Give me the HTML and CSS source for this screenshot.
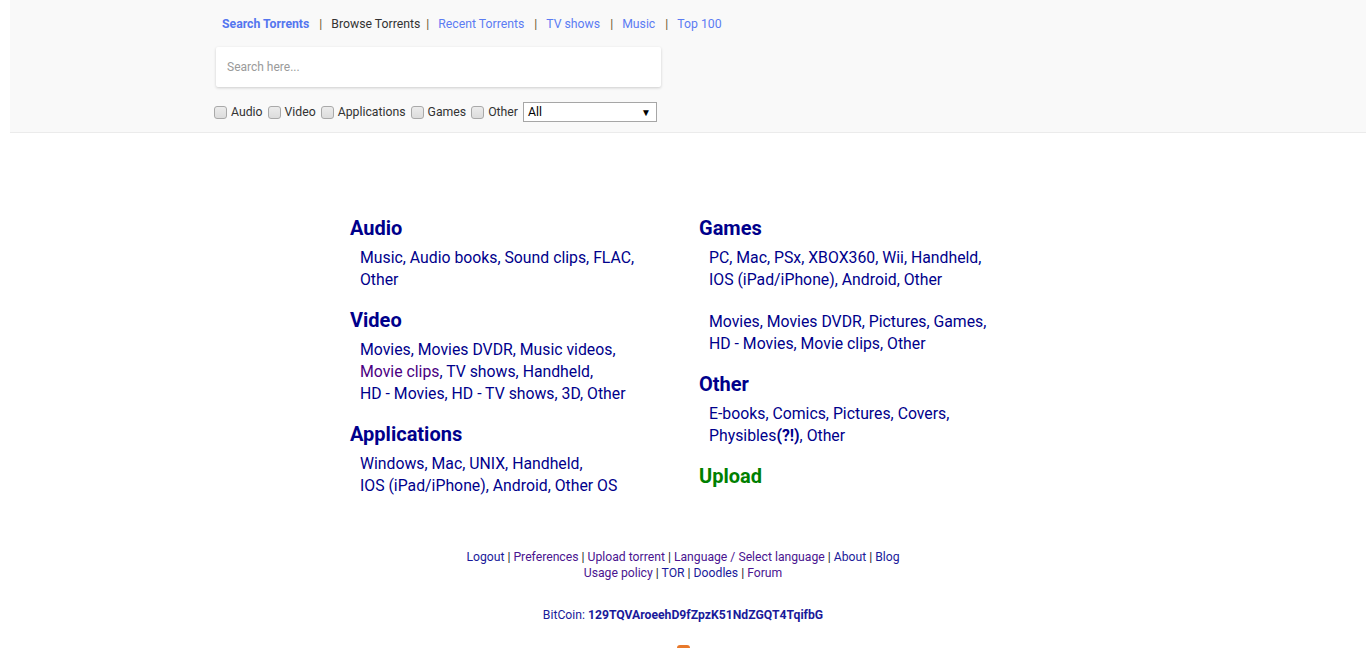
FILE: index.html
```html
<!DOCTYPE html>
<html>
<head>
<meta charset="utf-8">
<link rel="stylesheet" href="styles.css">
</head>
<body>
<div class="header">
  <div class="header-inner">
    <div class="nav">
      <a class="nav-link active" href="#">Search Torrents</a><span class="sep">|</span><span class="nav-plain">Browse Torrents</span><span class="sep sep-b">|</span><a class="nav-link" href="#">Recent Torrents</a><span class="sep">|</span><a class="nav-link" href="#">TV shows</a><span class="sep">|</span><a class="nav-link" href="#">Music</a><span class="sep">|</span><a class="nav-link" href="#">Top 100</a>
    </div>
    <div class="search">
      <input class="search-input" type="text" placeholder="Search here...">
    </div>
    <div class="filters">
      <label class="chk"><input type="checkbox">Audio</label>
      <label class="chk"><input type="checkbox">Video</label>
      <label class="chk"><input type="checkbox">Applications</label>
      <label class="chk"><input type="checkbox">Games</label>
      <label class="chk"><input type="checkbox">Other</label>
      <div class="select"><span>All</span><span class="arrow">▼</span></div>
    </div>
  </div>
</div>

<div class="main">
  <div class="col">
    <div class="cat">
      <h2 class="cat-title">Audio</h2>
      <div class="cat-links"><a href="#">Music</a>, <a href="#">Audio books</a>, <a href="#">Sound clips</a>, <a href="#">FLAC</a>,<br><a href="#">Other</a></div>
    </div>
    <div class="cat">
      <h2 class="cat-title">Video</h2>
      <div class="cat-links"><a href="#">Movies</a>, <a href="#">Movies DVDR</a>, <a href="#">Music videos</a>,<br><a href="#" class="visited">Movie clips</a>, <a href="#">TV shows</a>, <a href="#">Handheld</a>,<br><a href="#">HD - Movies</a>, <a href="#">HD - TV shows</a>, <a href="#">3D</a>, <a href="#">Other</a></div>
    </div>
    <div class="cat">
      <h2 class="cat-title">Applications</h2>
      <div class="cat-links"><a href="#">Windows</a>, <a href="#">Mac</a>, <a href="#">UNIX</a>, <a href="#">Handheld</a>,<br><a href="#">IOS (iPad/iPhone)</a>, <a href="#">Android</a>, <a href="#">Other OS</a></div>
    </div>
  </div>
  <div class="col">
    <div class="cat">
      <h2 class="cat-title">Games</h2>
      <div class="cat-links"><a href="#">PC</a>, <a href="#">Mac</a>, <a href="#">PSx</a>, <a href="#">XBOX360</a>, <a href="#">Wii</a>, <a href="#">Handheld</a>,<br><a href="#">IOS (iPad/iPhone)</a>, <a href="#">Android</a>, <a href="#">Other</a></div>
      <div class="cat-links extra"><a href="#">Movies</a>, <a href="#">Movies DVDR</a>, <a href="#">Pictures</a>, <a href="#">Games</a>,<br><a href="#">HD - Movies</a>, <a href="#">Movie clips</a>, <a href="#">Other</a></div>
    </div>
    <div class="cat">
      <h2 class="cat-title">Other</h2>
      <div class="cat-links"><a href="#">E-books</a>, <a href="#">Comics</a>, <a href="#">Pictures</a>, <a href="#">Covers</a>,<br><a href="#">Physibles<b>(?!)</b></a>, <a href="#">Other</a></div>
    </div>
    <div class="cat">
      <h2 class="cat-title upload">Upload</h2>
    </div>
  </div>
</div>

<div class="footer">
  <div class="foot-line"><a href="#">Logout</a> | <a href="#" class="visited">Preferences</a> | <a href="#" class="visited">Upload torrent</a> | <a href="#" class="visited">Language / Select language</a> | <a href="#">About</a> | <a href="#">Blog</a></div>
  <div class="foot-line"><a href="#" class="visited">Usage policy</a> | <a href="#">TOR</a> | <a href="#">Doodles</a> | <a href="#" class="visited">Forum</a></div>
  <div class="bitcoin">BitCoin: <b>129TQVAroeehD9fZpzK51NdZGQT4TqifbG</b></div>
  <div class="orange"></div>
</div>
</body>
</html>
```

FILE: styles.css
```css
html, body {
  margin: 0;
  padding: 0;
  background: #fff;
  font-family: Roboto, "Liberation Sans", sans-serif;
  overflow: hidden;
}

a { text-decoration: none; }

.header {
  margin-left: 10px;
  background: #f9f9f9;
  border-bottom: 1px solid #ebebeb;
  height: 133px;
  box-sizing: border-box;
}

.header-inner {
  padding-left: 204px;
  padding-top: 17px;
  width: 450px;
}

.nav {
  font-size: 12.25px;
  line-height: 15px;
  height: 15px;
  padding-left: 8px;
  white-space: nowrap;
  color: #333;
}

.nav-link { color: #5c7cf3; }
.nav-link.active { font-weight: bold; color: #5476ef; }
.nav-plain { color: #333; }

.sep {
  color: #6b5a2e;
  margin: 0 9px 0 10px;
}
.sep-b { margin: 0 9px 0 6px; }

.search {
  margin-top: 15px;
  margin-left: 2px;
  width: 445px;
  height: 40px;
  background: #fff;
  border-radius: 2px;
  box-shadow: 0 1px 3px rgba(0,0,0,0.18);
}

.search-input {
  border: none;
  outline: none;
  background: transparent;
  width: 100%;
  height: 40px;
  box-sizing: border-box;
  padding: 0 11px;
  font-family: Roboto, "Liberation Sans", sans-serif;
  font-size: 12px;
  color: #333;
}
.search-input::placeholder { color: #9a9a9a; }

.filters {
  margin-top: 15px;
  display: flex;
  align-items: center;
  height: 20px;
  font-size: 12.25px;
  color: #333;
  white-space: nowrap;
}

.chk {
  display: flex;
  align-items: center;
  margin-right: 5px;
}
.chk:last-of-type { margin-right: 3px; }
.chk input {
  -webkit-appearance: none;
  appearance: none;
  margin: 0 4px 0 0;
  width: 13px;
  height: 13px;
  box-sizing: border-box;
  border: 1px solid #a9a9a9;
  border-radius: 3px;
  background: linear-gradient(#ececec, #dcdcdc);
}

.select {
  margin-left: 2px;
  width: 134px;
  height: 20px;
  box-sizing: border-box;
  border: 1px solid #a6a6a6;
  background: #fff;
  display: flex;
  align-items: center;
  justify-content: space-between;
  padding: 0 5px 0 4px;
  font-size: 12.25px;
  color: #000;
}
.select .arrow { font-size: 10px; }

.main {
  margin: 84px 0 0 350px;
  display: grid;
  grid-template-columns: 349px 349px;
}

.cat { margin-bottom: 18px; }

.cat-title {
  margin: 0;
  font-size: 20px;
  line-height: 22px;
  padding-bottom: 2px;
  font-weight: bold;
  color: #00008b;
}
.cat-title.upload { color: #008000; }

.cat-links {
  margin-top: 6px;
  padding-left: 10px;
  font-size: 15.8px;
  line-height: 22px;
  color: #00008b;
}
.cat-links a { color: #00008b; }
.cat-links a.visited { color: #4b0082; }
.cat-links.extra { margin-top: 20px; }

.footer {
  margin-top: 34px;
  text-align: center;
  font-size: 12.2px;
  line-height: 16px;
  color: #222;
}
.footer a { color: #1a1a9a; }
.footer a.visited { color: #4b1590; }

.bitcoin {
  margin-top: 26px;
  color: #1a1a9a;
}
.bitcoin b { color: #1a1a9a; }

.orange {
  margin: 22px auto 0;
  width: 13px;
  height: 8px;
  background: #e8792b;
  border-radius: 3px 3px 0 0;
}
```
